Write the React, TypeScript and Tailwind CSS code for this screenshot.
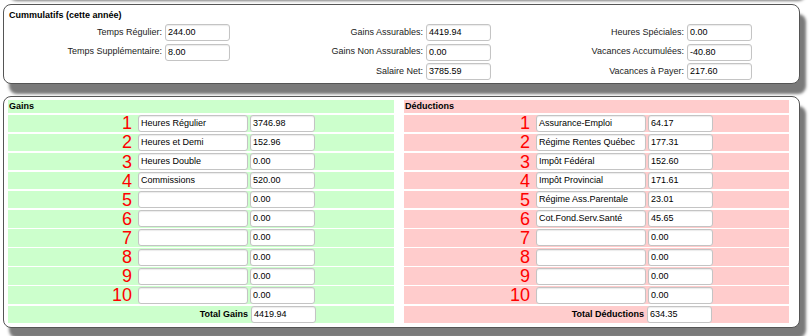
import React from "react";

const inputCls =
  "h-[17px] rounded-[3px] border border-[#c4c4c4] bg-white px-[2px] text-[9px] leading-[15px] text-black shadow-[inset_0_1px_1px_rgba(0,0,0,0.08)] whitespace-nowrap overflow-hidden";

function Field({ label, value }: { label: string; value: string }) {
  return (
    <div className="flex h-[17px] items-center justify-end">
      <span className="whitespace-nowrap text-[9px] text-[#222]">{label}</span>
      <div className={`${inputCls} ml-[3px] w-[65px]`}>{value}</div>
    </div>
  );
}

type Row = { name: string; value: string };

function Section({
  title,
  rows,
  totalLabel,
  total,
  bg,
  numW,
}: {
  title: string;
  rows: Row[];
  totalLabel: string;
  total: string;
  bg: string;
  numW: string;
}) {
  return (
    <div className="flex flex-col">
      <div className={`${bg} h-[13px] pl-[1px] text-[9px] font-bold leading-[13px]`}>{title}</div>
      {rows.map((r, i) => (
        <div key={i} className={`${bg} mt-[1.6px] flex h-[17.5px] items-center`}>
          <div className={`${numW} text-right text-[18px] leading-none text-[#ff0000]`}>{i + 1}</div>
          <div className={`${inputCls} ml-[6px] w-[110px]`}>{r.name}</div>
          <div className={`${inputCls} ml-[2px] w-[65px]`}>{r.value}</div>
        </div>
      ))}
      <div className={`${bg} mt-[1.6px] flex h-[17.5px] items-center`}>
        <div className="w-[240px] text-right text-[9px] font-bold">{totalLabel}</div>
        <div className={`${inputCls} ml-[3px] w-[65px]`}>{total}</div>
      </div>
    </div>
  );
}

const gains: Row[] = [
  { name: "Heures Régulier", value: "3746.98" },
  { name: "Heures et Demi", value: "152.96" },
  { name: "Heures Double", value: "0.00" },
  { name: "Commissions", value: "520.00" },
  { name: "", value: "0.00" },
  { name: "", value: "0.00" },
  { name: "", value: "0.00" },
  { name: "", value: "0.00" },
  { name: "", value: "0.00" },
  { name: "", value: "0.00" },
];

const deductions: Row[] = [
  { name: "Assurance-Emploi", value: "64.17" },
  { name: "Régime Rentes Québec", value: "177.31" },
  { name: "Impôt Fédéral", value: "152.60" },
  { name: "Impôt Provincial", value: "171.61" },
  { name: "Régime Ass.Parentale", value: "23.01" },
  { name: "Cot.Fond.Serv.Santé", value: "45.65" },
  { name: "", value: "0.00" },
  { name: "", value: "0.00" },
  { name: "", value: "0.00" },
  { name: "", value: "0.00" },
];

export default function App() {
  return (
    <div className="h-[336px] w-[810px] overflow-hidden bg-white font-['Liberation_Sans',Arial,sans-serif] text-black">
      {/* bottom of previous panel (only its shadow is visible) */}
      <div className="-mt-[30px] ml-[3px] h-[21px] w-[797px] rounded-[8px] border border-[#555] bg-white shadow-[6px_10px_3px_#7a7a7a]" />

      {/* Cumulatifs panel */}
      <div className="relative mt-[13px] ml-[3px] h-[80px] w-[797px] rounded-[8px] border border-[#555] bg-white px-[4px] pt-[5px] shadow-[6px_10px_3px_#7a7a7a]">
        <div className="pl-[1px] text-[9px] font-bold leading-[11px]">Cummulatifs (cette année)</div>
        <div className="mt-[3px] grid w-[783px] grid-cols-3">
          <div className="flex flex-col gap-[2.5px] pr-[39px]">
            <Field label="Temps Régulier:" value="244.00" />
            <Field label="Temps Supplémentaire:" value="8.00" />
          </div>
          <div className="flex flex-col gap-[2.5px] pr-[39px]">
            <Field label="Gains Assurables:" value="4419.94" />
            <Field label="Gains Non Assurables:" value="0.00" />
            <Field label="Salaire Net:" value="3785.59" />
          </div>
          <div className="flex flex-col gap-[2.5px] pr-[39px]">
            <Field label="Heures Spéciales:" value="0.00" />
            <Field label="Vacances Accumulées:" value="-40.80" />
            <Field label="Vacances à Payer:" value="217.60" />
          </div>
        </div>
      </div>

      {/* Gains / Déductions panel */}
      <div className="relative mt-[12px] ml-[3px] h-[232px] w-[797px] rounded-[8px] border border-[#555] bg-white pl-[4px] pt-[3px] shadow-[6px_10px_3px_#7a7a7a]">
        <div className="flex">
          <div className="w-[386px]">
            <Section
              title="Gains"
              rows={gains}
              totalLabel="Total Gains"
              total="4419.94"
              bg="bg-[#ccffcc]"
              numW="w-[124px]"
            />
          </div>
          <div className="ml-[10px] w-[385px]">
            <Section
              title="Déductions"
              rows={deductions}
              totalLabel="Total Déductions"
              total="634.35"
              bg="bg-[#ffcccc]"
              numW="w-[126px]"
            />
          </div>
        </div>
      </div>
    </div>
  );
}
